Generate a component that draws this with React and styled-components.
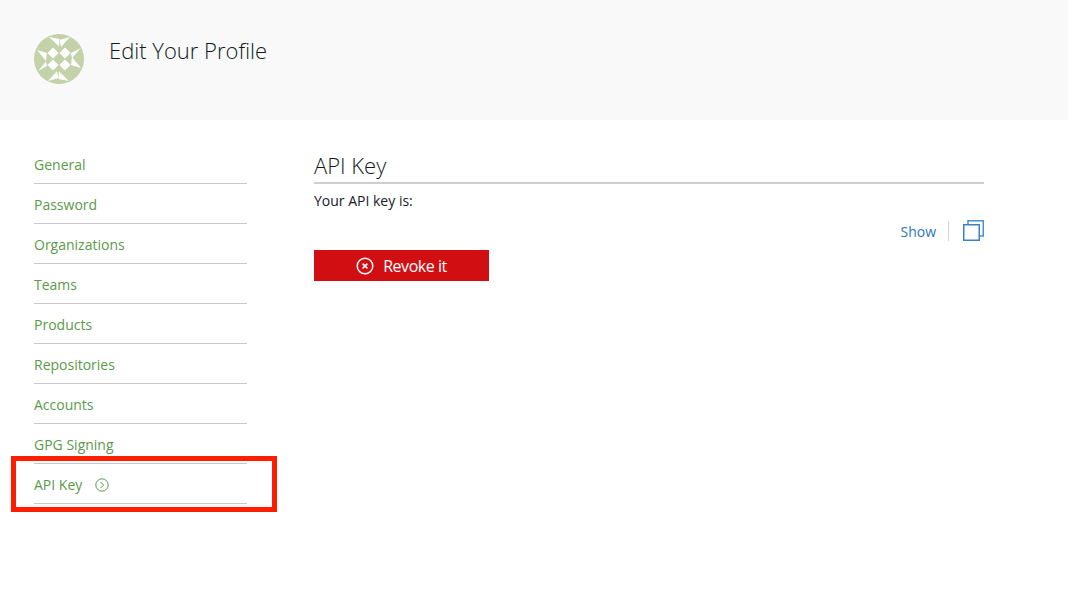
import { createGlobalStyle, styled } from "styled-components";

const MENU = ["General", "Password", "Organizations", "Teams", "Products", "Repositories", "Accounts", "GPG Signing", "API Key"];

export default function App() {
  return (
    <>
      <GlobalStyle />
      <Header>
        <Avatar />
        <PageTitle>Edit Your Profile</PageTitle>
      </Header>
      <Content>
        <Sidebar>
          <SideMenu>
            {MENU.map(item => (
              <MenuItem key={item}>
                {item}
                {item === "API Key" && <ArrowIcon />}
              </MenuItem>
            ))}
          </SideMenu>
          <Highlight />
        </Sidebar>
        <Main>
          <SectionTitle>API Key</SectionTitle>
          <KeyLabel>Your API key is:</KeyLabel>
          <KeyActions>
            <ShowLink>Show</ShowLink>
            <CopyIcon />
          </KeyActions>
          <RevokeButton>
            <RevokeIcon />
            Revoke it
          </RevokeButton>
        </Main>
      </Content>
    </>
  );
}

function Avatar() {
  return (
    <AvatarSvg viewBox="0 0 50 50">
      <circle cx="25" cy="25" r="25" fill="#c3d2a9" />
      <g fill="#fff">
        <polygon points="19,13.5 24.5,19 19,24.5 13.5,19" />
        <polygon points="31,13.5 36.5,19 31,24.5 25.5,19" />
        <polygon points="19,25.5 24.5,31 19,36.5 13.5,31" />
        <polygon points="31,25.5 36.5,31 31,36.5 25.5,31" />
        <polygon points="15,3 25.5,5 25,12.5" />
        <polygon points="36,3 27,13 25.5,6" />
        <polygon points="3,16 13,19 12,27" />
        <polygon points="47,14 38,24 37,19" />
        <polygon points="4,37 12,27.5 13,32" />
        <polygon points="47,34 37,31 38,23" />
        <polygon points="14,47 23,37 24.5,44" />
        <polygon points="35,47 24.5,45 25,37.5" />
      </g>
    </AvatarSvg>
  );
}

function ArrowIcon() {
  return (
    <ArrowSvg viewBox="0 0 14 14">
      <circle cx="7" cy="7" r="6.2" />
      <polyline points="5.6,4 8.6,7 5.6,10" />
    </ArrowSvg>
  );
}

function CopyIcon() {
  return (
    <CopySvg viewBox="0 0 21 21">
      <polyline points="5,4.5 5,0.75 20.25,0.75 20.25,16 16,16" stroke="#4a90d2" />
      <rect x="0.75" y="4.75" width="15.5" height="15.5" stroke="#3f7fc6" />
    </CopySvg>
  );
}

function RevokeIcon() {
  return (
    <RevokeSvg viewBox="0 0 18 18">
      <circle cx="9" cy="9" r="7.8" />
      <path d="M6.6 6.6 L11.4 11.4 M11.4 6.6 L6.6 11.4" />
    </RevokeSvg>
  );
}

const GlobalStyle = createGlobalStyle`
  body {
    margin: 0;
    background: #fff;
    font-family: "Open Sans", "Liberation Sans", sans-serif;
    color: #1f2a33;
  }

  #root {
    min-height: 100vh;
  }
`;

const Header = styled.header`
  height: 120px;
  box-sizing: border-box;
  padding: 34px 0 0 34px;
  display: flex;
  align-items: flex-start;
  gap: 25px;
  background: #f9f9f9;
`;

const AvatarSvg = styled.svg`
  width: 50px;
  height: 50px;
  flex: none;
`;

const PageTitle = styled.h1`
  margin: 0;
  font-size: 22px;
  line-height: 32px;
  font-weight: 300;
  color: #0f1a22;
`;

const Content = styled.div`
  display: flex;
  padding: 24px 84px 0 34px;
  gap: 67px;
`;

const Sidebar = styled.div`
  position: relative;
  width: 213px;
  flex: none;
`;

const SideMenu = styled.ul`
  margin: 0;
  padding: 0;
  list-style: none;
`;

const MenuItem = styled.li`
  height: 40px;
  box-sizing: border-box;
  display: flex;
  align-items: center;
  padding: 1px 0 0 0;
  border-bottom: 1px solid #c8c8c8;
  font-size: 14px;
  color: #5b9a4a;
`;

const ArrowSvg = styled.svg`
  width: 14px;
  height: 14px;
  margin: 1px 0 0 13px;
  fill: none;
  stroke: #5b9a4a;
  stroke-width: 1;
`;

const Highlight = styled.div`
  position: absolute;
  left: -23px;
  bottom: -8px;
  width: 266px;
  height: 56px;
  box-sizing: border-box;
  border: 5px solid #fb1e00;
`;

const Main = styled.main`
  flex: 1;
  min-width: 0;
`;

const SectionTitle = styled.h2`
  margin: 0;
  height: 40px;
  box-sizing: border-box;
  font-size: 22px;
  line-height: 42px;
  font-weight: 300;
  color: #0f1a22;
  border-bottom: 2px solid #cfcfcf;
`;

const KeyLabel = styled.p`
  margin: 0;
  font-size: 14px;
  line-height: 34px;
  color: #16212a;
`;

const KeyActions = styled.div`
  display: flex;
  justify-content: flex-end;
  align-items: center;
  height: 21px;
  margin-top: 2px;
`;

const ShowLink = styled.a`
  font-size: 14px;
  color: #2a76b8;
  padding: 2px 12px 0 0;
  margin-right: 14px;
  border-right: 1px solid #d5d5d5;
  line-height: 18px;
`;

const CopySvg = styled.svg`
  width: 21px;
  height: 21px;
  fill: none;
  stroke-width: 1.5;
`;

const RevokeButton = styled.button`
  display: flex;
  align-items: center;
  justify-content: center;
  gap: 9px;
  width: 175px;
  height: 31px;
  margin-top: 9px;
  padding: 0;
  border: 0;
  background: #d10f12;
  color: #fff;
  font-family: inherit;
  font-size: 16px;
  letter-spacing: -0.45px;
`;

const RevokeSvg = styled.svg`
  width: 18px;
  height: 18px;
  fill: none;
  stroke: #fff;
  stroke-width: 1.5;
`;
